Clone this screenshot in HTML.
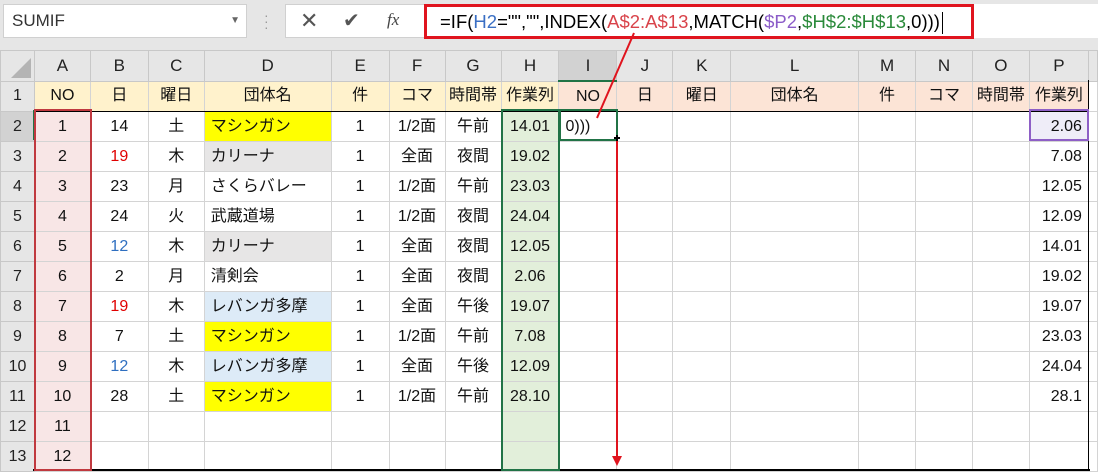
<!DOCTYPE html>
<html><head><meta charset="utf-8"><style>
body{margin:0;width:1098px;height:473px;background:#fff;position:relative;overflow:hidden;font-family:"Liberation Sans","Noto Sans CJK JP",sans-serif;}
.top{position:absolute;left:0;top:0;width:1098px;height:50px;background:#e6e6e6;}
.nb{position:absolute;left:3px;top:4px;width:244px;height:34px;background:#fff;border:1px solid #d0d0d0;box-sizing:border-box;font-size:17px;line-height:32px;padding-left:8px;color:#333;}
.fx{position:absolute;left:285px;top:4px;width:140px;height:34px;background:#fff;border:1px solid #d0d0d0;box-sizing:border-box;}
.fb{position:absolute;left:424px;top:4px;width:674px;height:34px;background:#fff;}
.rb{position:absolute;left:424px;top:4px;width:550px;height:35px;border:3px solid #e0141e;box-sizing:border-box;font-size:18.5px;line-height:29px;padding-left:13px;white-space:nowrap;}
table{position:absolute;left:0;top:50px;border-collapse:collapse;table-layout:fixed;}
td{height:29px;border:1px solid #d4d4d4;font-size:16px;line-height:20px;text-align:center;padding:0;white-space:nowrap;overflow:hidden;color:#111;vertical-align:middle;}
tr.h td{background:#e6e6e6;border-color:#c8c8c8;height:29px;color:#222;font-size:17px;}
td.rh{background:#e6e6e6;border-color:#c8c8c8;color:#222;}
tr.r1 td{background:#fff2cc;border-bottom:1px solid #000;}
tr.r1 td.o{background:#fce4d6;}
tr.r1 td.rh{background:#e6e6e6;border-bottom-color:#c8c8c8;}
td.a{background:#f8e6e6;}
td.hh{background:#e2efda;text-align:center;}
td.y{background:#ffff00;text-align:left;padding-left:6px;}
td.g{background:#e7e6e6;text-align:left;padding-left:6px;}
td.b{background:#ddebf7;text-align:left;padding-left:6px;}
td.l{text-align:left;padding-left:6px;}
td.p{text-align:right;padding-right:6px;}
.red{color:#e00000}.blu{color:#2f6fc0}
.box{position:absolute;box-sizing:border-box;}
</style></head><body>
<div class="top"></div>
<div class="nb">SUMIF<span style="position:absolute;right:6px;top:0;font-size:10px;color:#666">▼</span></div>
<div style="position:absolute;left:264px;top:12px;color:#999;font-size:14px;line-height:6px">·<br>·<br>·</div>
<div class="fx"><span style="position:absolute;left:14px;top:3px;font-size:22px;color:#555">✕</span><span style="position:absolute;left:57px;top:3px;font-size:20px;color:#555">✔</span><span style="position:absolute;left:101px;top:5px;font-size:17px;font-style:italic;font-family:'Liberation Serif',serif;color:#444">fx</span></div>
<div class="fb"></div>
<div class="rb">=IF(<span style="color:#3a6fc4">H2</span>="","",INDEX(<span style="color:#d9434a">A$2:A$13</span>,MATCH(<span style="color:#8b5cc8">$P2</span>,<span style="color:#2a8a3a">$H$2:$H$13</span>,0)))<span style="display:inline-block;width:1px;height:22px;background:#000;vertical-align:middle;margin-left:2px"></span></div>
<table>
<colgroup><col style="width:34px"><col style="width:56px"><col style="width:58px"><col style="width:56px"><col style="width:127px"><col style="width:58px"><col style="width:56px"><col style="width:56px"><col style="width:58px"><col style="width:58px"><col style="width:56px"><col style="width:58px"><col style="width:128px"><col style="width:57px"><col style="width:57px"><col style="width:57px"><col style="width:59px"><col style="width:9px"></colgroup>
<tr class="h"><td style="position:relative"><div style="position:absolute;right:3px;bottom:3px;width:0;height:0;border-left:20px solid transparent;border-bottom:20px solid #b4b4b4"></div></td><td>A</td><td>B</td><td>C</td><td>D</td><td>E</td><td>F</td><td>G</td><td>H</td><td style="background:#d2d2d2;border-bottom:2px solid #217346">I</td><td>J</td><td>K</td><td>L</td><td>M</td><td>N</td><td>O</td><td>P</td><td></td></tr>
<tr class="r1"><td class="rh">1</td><td>NO</td><td>日</td><td>曜日</td><td>団体名</td><td>件</td><td>コマ</td><td>時間帯</td><td style="border-left:1px solid #000">作業列</td><td class="o" style="border-left:1px solid #000">NO</td><td class="o">日</td><td class="o">曜日</td><td class="o">団体名</td><td class="o">件</td><td class="o">コマ</td><td class="o">時間帯</td><td class="o" style="border-right:1px solid #000">作業列</td><td style="background:#fff;border-bottom-color:#d4d4d4"></td></tr>
<tr><td class="rh" style="background:#d2d2d2">2</td><td class="a">1</td><td>14</td><td>土</td><td class="y">マシンガン</td><td>1</td><td>1/2面</td><td>午前</td><td class="hh">14.01</td><td class="l">0)))</td><td></td><td></td><td></td><td></td><td></td><td></td><td class="p" style="background:#efedf8">2.06</td><td></td></tr>
<tr><td class="rh">3</td><td class="a">2</td><td class="red">19</td><td>木</td><td class="g">カリーナ</td><td>1</td><td>全面</td><td>夜間</td><td class="hh">19.02</td><td></td><td></td><td></td><td></td><td></td><td></td><td></td><td class="p">7.08</td><td></td></tr>
<tr><td class="rh">4</td><td class="a">3</td><td>23</td><td>月</td><td class="l">さくらバレー</td><td>1</td><td>1/2面</td><td>午前</td><td class="hh">23.03</td><td></td><td></td><td></td><td></td><td></td><td></td><td></td><td class="p">12.05</td><td></td></tr>
<tr><td class="rh">5</td><td class="a">4</td><td>24</td><td>火</td><td class="l">武蔵道場</td><td>1</td><td>1/2面</td><td>夜間</td><td class="hh">24.04</td><td></td><td></td><td></td><td></td><td></td><td></td><td></td><td class="p">12.09</td><td></td></tr>
<tr><td class="rh">6</td><td class="a">5</td><td class="blu">12</td><td>木</td><td class="g">カリーナ</td><td>1</td><td>全面</td><td>夜間</td><td class="hh">12.05</td><td></td><td></td><td></td><td></td><td></td><td></td><td></td><td class="p">14.01</td><td></td></tr>
<tr><td class="rh">7</td><td class="a">6</td><td>2</td><td>月</td><td class="l">清剣会</td><td>1</td><td>全面</td><td>夜間</td><td class="hh">2.06</td><td></td><td></td><td></td><td></td><td></td><td></td><td></td><td class="p">19.02</td><td></td></tr>
<tr><td class="rh">8</td><td class="a">7</td><td class="red">19</td><td>木</td><td class="b">レバンガ多摩</td><td>1</td><td>全面</td><td>午後</td><td class="hh">19.07</td><td></td><td></td><td></td><td></td><td></td><td></td><td></td><td class="p">19.07</td><td></td></tr>
<tr><td class="rh">9</td><td class="a">8</td><td>7</td><td>土</td><td class="y">マシンガン</td><td>1</td><td>1/2面</td><td>午前</td><td class="hh">7.08</td><td></td><td></td><td></td><td></td><td></td><td></td><td></td><td class="p">23.03</td><td></td></tr>
<tr><td class="rh">10</td><td class="a">9</td><td class="blu">12</td><td>木</td><td class="b">レバンガ多摩</td><td>1</td><td>全面</td><td>午後</td><td class="hh">12.09</td><td></td><td></td><td></td><td></td><td></td><td></td><td></td><td class="p">24.04</td><td></td></tr>
<tr><td class="rh">11</td><td class="a">10</td><td>28</td><td>土</td><td class="y">マシンガン</td><td>1</td><td>1/2面</td><td>午前</td><td class="hh">28.10</td><td></td><td></td><td></td><td></td><td></td><td></td><td></td><td class="p">28.1</td><td></td></tr>
<tr><td class="rh">12</td><td class="a">11</td><td></td><td></td><td></td><td></td><td></td><td></td><td class="hh"></td><td></td><td></td><td></td><td></td><td></td><td></td><td></td><td></td><td></td></tr>
<tr><td class="rh">13</td><td class="a">12</td><td></td><td></td><td></td><td></td><td></td><td></td><td class="hh"></td><td></td><td></td><td></td><td></td><td></td><td></td><td></td><td></td><td></td></tr>
</table>
<div class="box" style="left:33px;top:469px;width:1057px;height:2px;background:#000"></div>
<div class="box" style="left:1088px;top:80px;width:1px;height:390px;background:#000"></div>
<div class="box" style="left:33px;top:110px;width:2px;height:30px;background:#217346"></div>
<div class="box" style="left:34px;top:109px;width:58px;height:362px;border:2px solid #c0393f"></div>
<div class="box" style="left:501px;top:109px;width:59px;height:362px;border:2px solid #217346"></div>
<div class="box" style="left:559px;top:109px;width:59px;height:32px;border:2px solid #217346"></div>
<div class="box" style="left:1029px;top:109px;width:60px;height:32px;border:2px solid #8e5fc6"></div>
<svg style="position:absolute;left:0;top:0" width="1098" height="473">
<line x1="634" y1="33" x2="597" y2="118" stroke="#e0141e" stroke-width="2"/>
<line x1="617" y1="140" x2="617" y2="458" stroke="#e0141e" stroke-width="2"/>
<polygon points="612,456 622,456 617,466" fill="#e0141e"/>
<rect x="614" y="137" width="6" height="2" fill="#000"/><rect x="616" y="135" width="2" height="6" fill="#000"/>
</svg>
</body></html>
